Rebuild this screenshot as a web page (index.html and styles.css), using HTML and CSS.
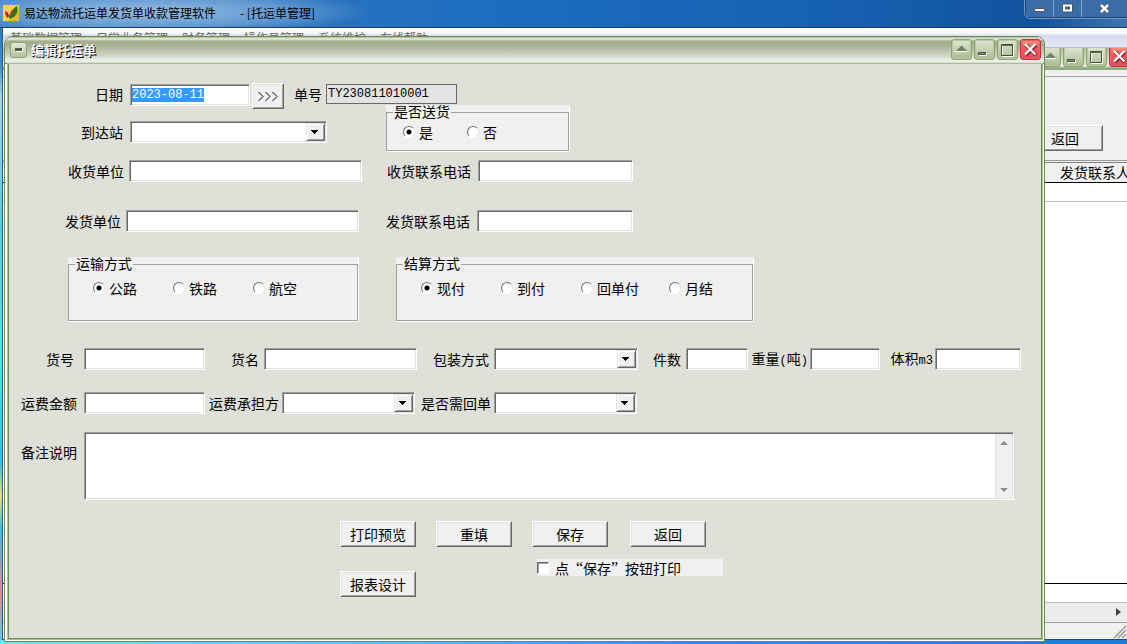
FILE: index.html
```html
<!DOCTYPE html>
<html lang="zh-CN">
<head>
<meta charset="utf-8">
<title>托运单管理</title>
<link rel="stylesheet" href="styles.css">
</head>
<body>
<svg class="defs" width="0" height="0" aria-hidden="true">
  <symbol id="i-roll" viewBox="0 0 21 21"><path d="M5 12L10.500 6.500L16 12z" fill="#6d8466"/><path d="M4 12.500H16" stroke="#fff"/></symbol>
  <symbol id="i-min" viewBox="0 0 21 21"><path d="M5 14h8v3H5z" fill="#fff"/><path d="M4 13h8v3H4z" fill="#4b5c43"/><path d="M5 14h6v1H5z" fill="#7b9170"/></symbol>
  <symbol id="i-max" viewBox="0 0 21 21"><path d="M5.500 6.500h11v11h-11z" fill="none" stroke="#fff"/><path d="M4.500 5.500h11v11h-11z" fill="none" stroke="#3f4f38"/><path d="M5 6h10v1H5z" fill="#5f7357"/></symbol>
  <symbol id="i-close" viewBox="0 0 21 21"><path d="M6 6L16 16M16 6L6 16" stroke="#7d2430" stroke-width="3.500"/><path d="M5 5L15.500 15.500M15.500 5L5 15.500" stroke="#fff" stroke-width="2.200"/></symbol>
</svg>
<div class="app">
  <header class="app-title">
    <svg class="logo" viewBox="0 0 16 16" aria-hidden="true"><path d="M0 0h16v16H0z" fill="#f6b62c"/><path d="M0 0h16v5L5 16H0z" fill="#ffd34a"/><path d="M2 6c3 1 3 2 4 5l-1 2c-2-1-3-4-3-7z" fill="#b8202a"/><path d="M14 1c2 5 0 10-7 13-2-3-1-4 1-6s2-5 6-7z" fill="#217a2c"/><path d="M10 4c1 1 0 5-3 6 0-2 1-4 3-6z" fill="#d8331f"/></svg>
    <span class="app-name">易达物流托运单发货单收款管理软件</span>
    <span class="app-doc">- [托运单管理]</span>
    <div class="sys">
      <button type="button" aria-label="最小化"><svg width="13" height="13" viewBox="0 0 13 13"><path d="M1.500 6.500h10v3h-10z" fill="#fff" stroke="#4d5666"/></svg></button>
      <button type="button" aria-label="最大化"><svg width="13" height="13" viewBox="0 0 13 13"><path d="M3 3.500h7v5H3z" fill="none" stroke="#4d5666" stroke-width="4"/><path d="M3 3.500h7v5H3z" fill="none" stroke="#fff" stroke-width="2"/></svg></button>
      <button type="button" class="wide" aria-label="关闭"><svg width="13" height="13" viewBox="0 0 13 13"><path d="M3 3l7 7M10 3l-7 7" stroke="#4d5666" stroke-width="4.500"/><path d="M3 3l7 7M10 3l-7 7" stroke="#fff" stroke-width="2.500"/></svg></button>
    </div>
  </header>
  <main class="workspace">
    <nav class="menu"><span>基础数据管理</span><span>日常业务管理</span><span>财务管理</span><span>操作员管理</span><span>系统维护</span><span>在线帮助</span></nav>
    <section class="child">
      <div class="child-title">
        <button type="button" class="wb" aria-label="卷起"><svg><use href="#i-roll"/></svg></button>
        <button type="button" class="wb" aria-label="最小化"><svg><use href="#i-min"/></svg></button>
        <button type="button" class="wb" aria-label="最大化"><svg><use href="#i-max"/></svg></button>
        <button type="button" class="wb red" aria-label="关闭"><svg><use href="#i-close"/></svg></button>
      </div>
      <div class="child-tools"><button type="button" class="btn">返回</button></div>
      <table class="list"><thead><tr><th>发货联系人</th></tr></thead><tbody><tr><td></td></tr></tbody></table>
      <div class="list-rest"></div>
      <div class="list-foot"></div>
      <div class="hscroll"><svg width="5" height="8" viewBox="0 0 5 8"><path d="M0 0l5 4-5 4z" fill="#444"/></svg></div>
      <footer class="status"><svg width="14" height="14" viewBox="0 0 14 14"><path d="M1 13L13 1M5 13l8-8M9 13l4-4" stroke="#999" stroke-width="1.500"/></svg></footer>
    </section>
  </main>

  <section class="dialog" role="dialog" aria-labelledby="dlg-title">
    <header class="dlg-title">
      <button type="button" class="sysmenu" aria-label="系统菜单"></button>
      <h1 id="dlg-title">编辑托运单</h1>
      <button type="button" class="wb" aria-label="卷起"><svg><use href="#i-roll"/></svg></button>
      <button type="button" class="wb" aria-label="最小化"><svg><use href="#i-min"/></svg></button>
      <button type="button" class="wb" aria-label="最大化"><svg><use href="#i-max"/></svg></button>
      <button type="button" class="wb red" aria-label="关闭"><svg><use href="#i-close"/></svg></button>
    </header>
    <form class="form">
      <div class="row r-date">
        <label for="date">日期</label>
        <input id="date" class="box" type="text" value="2023-08-11">
        <button type="button" class="btn pick" aria-label="选择日期"><svg width="20" height="11" viewBox="0 0 20 11"><path d="M.5 1l4.500 4.500L.5 10M7.500 1l4.500 4.500L7.500 10M14.500 1l4.500 4.500-4.500 4.500" fill="none" stroke="#000"/></svg></button>
        <label for="no">单号</label>
        <input id="no" class="box flat" type="text" value="TY230811010001" readonly>
      </div>
      <div class="row r-station">
        <label for="station">到达站</label>
        <span class="combo"><select id="station"><option></option></select></span>
        <div class="group">
          <fieldset><legend>是否送货</legend>
            <div class="opts deliver">
              <label><input type="radio" name="deliver" checked>是</label>
              <label><input type="radio" name="deliver">否</label>
            </div>
          </fieldset>
        </div>
      </div>
      <div class="row r-recv">
        <label for="recv">收货单位</label><input id="recv" class="box" type="text">
        <label for="recvtel">收货联系电话</label><input id="recvtel" class="box" type="text">
      </div>
      <div class="row r-send">
        <label for="send">发货单位</label><input id="send" class="box" type="text">
        <label for="sendtel">发货联系电话</label><input id="sendtel" class="box" type="text">
      </div>
      <div class="row r-groups">
        <div class="group">
          <fieldset><legend>运输方式</legend>
            <div class="opts">
              <label><input type="radio" name="mode" checked>公路</label>
              <label><input type="radio" name="mode">铁路</label>
              <label><input type="radio" name="mode">航空</label>
            </div>
          </fieldset>
        </div>
        <div class="group">
          <fieldset><legend>结算方式</legend>
            <div class="opts">
              <label><input type="radio" name="pay" checked>现付</label>
              <label><input type="radio" name="pay">到付</label>
              <label class="long"><input type="radio" name="pay">回单付</label>
              <label><input type="radio" name="pay">月结</label>
            </div>
          </fieldset>
        </div>
      </div>
      <div class="row r-goods">
        <label for="gno">货号</label><input id="gno" class="box" type="text">
        <label for="gname">货名</label><input id="gname" class="box" type="text">
        <label for="pack">包装方式</label><span class="combo"><select id="pack"><option></option></select></span>
        <label for="qty">件数</label><input id="qty" class="box" type="text">
        <label for="wt">重量<span class="mono">(</span>吨<span class="mono">)</span></label><input id="wt" class="box" type="text">
        <label for="vol">体积<span class="mono">m3</span></label><input id="vol" class="box" type="text">
      </div>
      <div class="row r-fee">
        <label for="fee">运费金额</label><input id="fee" class="box" type="text">
        <label for="payer">运费承担方</label><span class="combo"><select id="payer"><option></option></select></span>
        <label for="back">是否需回单</label><span class="combo"><select id="back"><option></option></select></span>
      </div>
      <div class="row r-note">
        <label for="note">备注说明</label>
        <div class="memo box">
          <textarea id="note"></textarea>
          <div class="vscroll">
            <svg width="8" height="5" viewBox="0 0 8 5"><path d="M0 5l4-4 4 4z" fill="#8a8a8a"/></svg>
            <svg width="8" height="5" viewBox="0 0 8 5"><path d="M0 0l4 4 4-4z" fill="#8a8a8a"/></svg>
          </div>
        </div>
      </div>
      <div class="actions">
        <button type="button" class="btn">打印预览</button>
        <button type="reset" class="btn">重填</button>
        <button type="button" class="btn">保存</button>
        <button type="button" class="btn">返回</button>
        <button type="button" class="btn design">报表设计</button>
        <label class="check"><input type="checkbox">点<span class="quote open">“</span>保存<span class="quote">”</span>按钮打印</label>
      </div>
    </form>
  </section>
</div>
<script src="main.js"></script>
</body>
</html>
```

FILE: main.js
```js
const date = document.getElementById('date');
date.focus();
date.select();
```

FILE: styles.css
```css
* { box-sizing: border-box; }
html, body { height: 100%; }
body {
  margin: 0;
  overflow: hidden;
  font: 14px/14px "Noto Sans CJK SC", sans-serif;
  color: #000;
}
button, input, select, textarea { font: inherit; margin: 0; padding: 0; border-radius: 0; color: inherit; }
.defs { position: absolute; }
.mono { font: 12px/14px "Liberation Mono", monospace; }

/* main window */
.app {
  position: relative;
  height: 100vh;
  display: flex;
  flex-direction: column;
  padding: 0 0 4px 2px;
  background:
    linear-gradient(90deg, #66e6fa, #48cdf8 35%, #2196ee 60%, #1c7bd6) left bottom / 100% 4px no-repeat,
    linear-gradient(#2a5f9e, #3f8ed0 10%, #a8d4f4 15%, #58c8ee 35%, #58e0f0 55%, #3cb8f4 72%, #e6e46c 77%, #40b8f0 82%, #d88ca8 92%, #60c8e8) left / 3px 100% no-repeat,
    #1c7bd6;
}
.app-title {
  flex: none;
  height: 28px;
  margin-left: -2px;
  padding-left: 3px;
  padding-bottom: 2px;
  display: flex;
  align-items: center;
  background:
    radial-gradient(ellipse 220px 24px at 150px 12px, rgba(190, 215, 240, .7), rgba(150, 190, 230, .5) 60%, transparent),
    linear-gradient(90deg, #3c7fc0, #2c74be 25%, #1c6cc0 45%, #1760b0 75%, #11529c 92%, #3e73ac);
  border-bottom: 1px solid #1c3c66;
  font-size: 12px;
  line-height: 16px;
}
.logo { width: 16px; height: 16px; margin-right: 5px; }
.app-doc { margin-left: 24px; }
.sys {
  align-self: flex-start;
  margin-left: auto;
  height: 18px;
  display: flex;
  border: 1px solid #1f4272;
  border-width: 0 0 1px 1px;
  border-radius: 0 0 0 5px;
  box-shadow: 0 1px #6f9bc9, -1px 0 #6f9bc9;
}
.sys button {
  width: 28px;
  display: flex;
  justify-content: center;
  align-items: center;
  border: 0;
  border-right: 1px solid #7ba2cb;
  background: #3a6ca8;
}
.sys .wide { width: 45px; border-right: 0; }
.workspace { flex: 1; min-height: 0; display: flex; flex-direction: column; overflow: hidden; background: #f0f0f0; border-left: 1px solid #315b76; }
.menu {
  flex: none;
  height: 20px;
  padding: 3px 7px 0;
  display: flex;
  gap: 14px;
  overflow: hidden;
  background: linear-gradient(#fff, #f3f5fb 30%, #d5daef 40%, #e4e8f6);
  border-bottom: 1px solid #b8bccb;
  font-size: 12px;
  line-height: 14px;
  color: #6a6560;
}
.child { flex: 1; min-height: 0; display: flex; flex-direction: column; }
.child-title {
  flex: none;
  height: 22px;
  display: flex;
  justify-content: flex-end;
  align-items: flex-start;
  gap: 2px;
  margin-right: -3px;
  overflow: hidden;
  background: linear-gradient(#b6bda6, #e9ebe2 75%, #fff 80%, #7c9a64 92%, #b5c7a4 95%, #7c8a72);
}
.child-title .wb { margin-top: -2px; }
.child-tools {
  flex: none;
  height: 93px;
  padding: 55px 24px 0 0;
  display: flex;
  justify-content: flex-end;
  border-bottom: 1px solid #808080;
  background: linear-gradient(#a0a0a0, #a0a0a0) 0 6px / 100% 1px no-repeat,
    linear-gradient(#9a9a9a, #9a9a9a) 0 90px / 100% 1px no-repeat, #f0f0f0;
}
.child-tools .btn { width: 76px; }
.list { flex: none; border-collapse: collapse; width: 100%; background: #fff; }
.list th { height: 19px; padding: 0; font-weight: 400; text-align: right; background: #f0f0f0; border-bottom: 1px solid #000; white-space: nowrap; }
.list thead { transform: translateX(3px); }
.list td { height: 19px; padding: 0; border-bottom: 1px solid #bcbcbc; }
.list-rest { flex: 1; background: #fff; border-bottom: 1px solid #000; }
.list-foot { flex: none; height: 19px; background: #fff; border-bottom: 1px solid #bcbcbc; }
.hscroll { flex: none; height: 20px; padding: 0 6px 2px 0; display: flex; justify-content: flex-end; align-items: center; background: #ececec; border-bottom: 1px solid #a0a0a0; }
.status { flex: none; height: 17px; padding: 2px 0 0; display: flex; justify-content: flex-end; background: #f0f0f0; border-bottom: 1px solid #274a75; }

/* skinned window buttons */
.wb {
  flex: none;
  width: 21px;
  height: 21px;
  border: 1px solid #8ba56b;
  border-radius: 3px;
  background: linear-gradient(#dde3d0, #c4d0b1 55%, #a9ba92);
  box-shadow: inset 0 0 0 1px #b9c8a2;
}
.wb svg { display: block; width: 21px; height: 21px; margin: -1px; }
.wb.red { background: linear-gradient(#f39a80, #ee5a5c 40%, #e34a54); border-color: #c2303e; box-shadow: inset 0 0 0 1px #e86068; }

/* dialog */
.dialog {
  position: absolute;
  left: 4px;
  right: 82px;
  top: 36px;
  bottom: 2px;
  display: flex;
  flex-direction: column;
  border: 1px solid #6b8d4e;
  border-radius: 8px 8px 0 0;
  background: #fff;
  overflow: hidden;
}
.dlg-title {
  flex: none;
  height: 27px;
  padding: 0 3px 2px 5px;
  display: flex;
  align-items: center;
  gap: 2px;
  background: linear-gradient(#aab598 0, #eceee6 2px, #a5ae8e 4px, #a8b092 8px, #cdd2c2 18px, #f0f1ec 24px, #d5d8cc 26px, #6f8f55 26px);
}
.dlg-title h1 { flex: 1; margin: 0 0 0 2px; font-size: 13px; line-height: 16px; font-weight: 700; color: #fff; text-shadow: 1px 1px #000; }
.sysmenu {
  width: 17px;
  height: 16px;
  display: flex;
  align-items: center;
  justify-content: center;
  border: 1px solid #8ba56b;
  border-radius: 3px;
  background: linear-gradient(#e4e9da, #b3c19d);
}
.sysmenu::before { content: ""; width: 7px; height: 3px; background: #4b5c43; box-shadow: 1px 1px #fff; }
.form {
  flex: 1;
  min-height: 0;
  margin: 0 2px 2px 3px;
  padding: 18px 27px 0 0;
  background: #dfe0d8;
  border: 1px solid #6b8d4e;
  border-width: 0 1px 1px;
  box-shadow: 0 0 0 1px #a9bf94;
}
.row { display: grid; align-items: center; }
.row > label { justify-self: end; padding-right: 7px; white-space: nowrap; }
.box {
  width: 100%;
  height: 22px;
  min-width: 0;
  padding: 0 1px;
  border: 1px solid;
  border-color: #a0a0a0 #fff #fff #a0a0a0;
  box-shadow: inset 1px 1px #696969, inset -1px -1px #e3e3e3;
  background: #fff;
  font: 12px/16px "Liberation Mono", monospace;
  outline: 0;
}
.box::selection { background: #39f; color: #fff; }
.flat { height: 20px; border-color: #696969; box-shadow: none; background: #e3e3e3; }
.btn {
  height: 26px;
  padding: 0;
  border: 1px solid;
  border-color: #fff #696969 #696969 #fff;
  box-shadow: inset 1px 1px #e3e3e3, inset -1px -1px #a0a0a0;
  background: #f0f0f0;
}
.combo {
  height: 22px;
  display: flex;
  padding: 1px;
  border: 1px solid;
  border-color: #a0a0a0 #fff #fff #a0a0a0;
  box-shadow: inset 1px 1px #696969, inset -1px -1px #e3e3e3;
  background: #fff;
}
.combo select { flex: 1; min-width: 0; border: 0; outline: 0; background: transparent; appearance: none; }
.combo::after {
  content: "";
  width: 17px;
  border: 1px solid;
  border-color: #e3e3e3 #696969 #696969 #e3e3e3;
  box-shadow: inset 1px 1px #fff, inset -1px -1px #a0a0a0;
  background:
    linear-gradient(#000, #000) 4px 6px / 7px 1px no-repeat,
    linear-gradient(#000, #000) 5px 7px / 5px 1px no-repeat,
    linear-gradient(#000, #000) 6px 8px / 3px 1px no-repeat,
    linear-gradient(#000, #000) 7px 9px / 1px 1px no-repeat,
    #f0f0f0;
}

.r-date { grid-template-columns: 121px 120px 34px 42px 131px; height: 23px; align-items: start; padding-top: 2px; }
.r-date > label { padding-top: 3px; }
.r-date .pick { margin: -1px 0 0 2px; }
.pick { width: 32px; display: flex; align-items: center; justify-content: center; }
.r-date .pick + label { padding-right: 4px; }
.r-station { grid-template-columns: 121px 197px 183px; }
.r-station .group { height: 47px; margin-left: 59px; width: 184px; }
.r-station .combo, .r-station > label { margin-top: 6px; }
.r-recv { grid-template-columns: 120px 233px 116px 155px; margin-top: 8px; }
.r-send { grid-template-columns: 117px 233px 118px 156px; margin-top: 28px; }
.r-recv > label:first-child, .r-send > label:first-child { padding-right: 5px; }
.r-groups { grid-template-columns: 291px 358px; column-gap: 37px; padding-left: 59px; margin-top: 25px; }
.r-goods { grid-template-columns: 75px 121px 59px 153px 77px 144px 48px 62px 62px 70px 55px 86px; margin-top: 26px; }
.r-goods > label { padding-right: 5px; }
.r-goods > label[for="gno"] { padding-right: 10px; }
.r-goods > label[for="wt"], .r-goods > label[for="vol"] { padding-right: 2px; }
.r-fee { grid-template-columns: 75px 121px 77px 133px 79px 143px; margin-top: 22px; }
.r-fee > label { padding-right: 3px; }
.r-fee > label:first-child, .r-note > label { padding-right: 7px; }
.r-note { grid-template-columns: 75px 1fr; align-items: start; margin-top: 18px; }
.r-note > label { padding-top: 13px; }
.memo { display: flex; height: 68px; padding: 1px; }
.memo textarea { flex: 1; min-width: 0; border: 0; outline: 0; resize: none; background: transparent; }
.vscroll { width: 17px; display: flex; flex-direction: column; justify-content: space-between; align-items: center; padding: 6px 0 5px; background: #f0f0f0; border-left: 1px solid #e3e3e3; }

/* group boxes */
.group { height: 65px; background: #f0f0f0; border: 1px solid #fff; border-width: 0 1px 1px 0; }
.group fieldset { height: 100%; min-width: 0; margin: 0; padding: 0 0 0 6px; border: 1px solid #a0a0a0; }
.group legend { height: 14px; padding: 0 1px; line-height: 13px; }
.opts { display: flex; padding: 10px 0 0 18px; }
.opts label { display: flex; align-items: center; gap: 4px; width: 80px; white-space: nowrap; }
.opts .long { width: 88px; }
.opts.deliver { padding: 6px 0 0 10px; }
.opts.deliver label { width: 64px; }
input[type="radio"] {
  appearance: none;
  width: 12px;
  height: 12px;
  border: 1px solid;
  border-color: #707070 #e8e8e8 #fff #707070;
  border-radius: 50%;
  background: #fff;
}
input[type="radio"]:checked { background: radial-gradient(circle at center, #000 2px, #fff 3px); }

.actions {
  display: grid;
  grid-template-columns: 76px 76px 76px 76px;
  column-gap: 20px;
  padding-left: 331px;
  margin-top: 21px;
  align-items: start;
}
.actions .btn:nth-child(4) { margin-left: 2px; margin-right: -2px; }
.design { margin-top: 24px; }
.check { grid-column: 3 / 5; justify-self: start; width: 186px; height: 17px; margin: 12px 0 0 5px; display: flex; align-items: center; background: #f0f0f0; line-height: 16px; white-space: nowrap; }
.check input {
  appearance: none;
  flex: none;
  width: 12px;
  height: 12px;
  margin-right: 6px;
  border: 1px solid;
  border-color: #696969 #fff #fff #696969;
  box-shadow: inset 1px 1px #a0a0a0;
  background: #fff;
}
.quote { width: 14px; font-family: "Liberation Serif", serif; font-size: 16px; }
.open { text-align: right; }
```
